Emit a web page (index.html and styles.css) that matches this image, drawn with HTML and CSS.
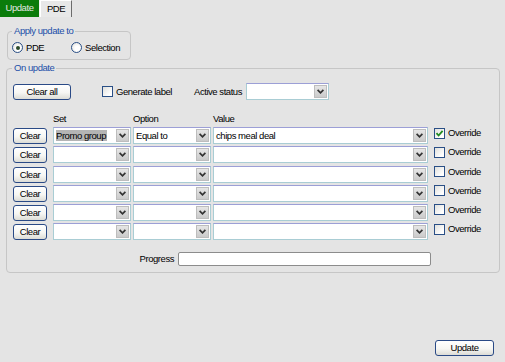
FILE: index.html
```html
<!DOCTYPE html>
<html>
<head>
<meta charset="utf-8">
<link rel="stylesheet" href="styles.css">
</head>
<body>
<div class="tabs">
  <div class="tab tab-active">Update</div>
  <div class="tab tab-idle">PDE</div>
</div>

<fieldset class="group group-apply">
  <legend>Apply update to</legend>
  <div class="radio-row">
    <span class="radio-item radio-first"><span class="radio radio-on"></span>PDE</span>
    <span class="radio-item"><span class="radio"></span>Selection</span>
  </div>
</fieldset>

<fieldset class="group group-on">
  <legend>On update</legend>
  <div class="toolbar">
    <button class="btn btn-clearall">Clear all</button>
    <span class="check-item check-gen"><span class="check"></span>Generate label</span>
    <span class="status-label">Active status</span>
    <span class="combo combo-status"><span class="combo-text"></span><span class="drop"><svg width="7" height="5" viewBox="0 0 7 5"><polyline points="0.6,0.8 3.5,3.8 6.4,0.8" fill="none" stroke="#333" stroke-width="1.7"/></svg></span></span>
  </div>

  <div class="grid">
    <div class="hdr"></div><div class="hdr">Set</div><div class="hdr">Option</div><div class="hdr">Value</div><div class="hdr"></div>

    <div><button class="btn btn-clear">Clear</button></div>
    <div><span class="combo combo-set"><span class="combo-text"><span class="sel">Promo group</span></span><span class="drop"><svg width="7" height="5" viewBox="0 0 7 5"><polyline points="0.6,0.8 3.5,3.8 6.4,0.8" fill="none" stroke="#333" stroke-width="1.7"/></svg></span></span></div>
    <div><span class="combo combo-opt"><span class="combo-text">Equal to</span><span class="drop"><svg width="7" height="5" viewBox="0 0 7 5"><polyline points="0.6,0.8 3.5,3.8 6.4,0.8" fill="none" stroke="#333" stroke-width="1.7"/></svg></span></span></div>
    <div><span class="combo combo-val"><span class="combo-text">chips meal deal</span><span class="drop"><svg width="7" height="5" viewBox="0 0 7 5"><polyline points="0.6,0.8 3.5,3.8 6.4,0.8" fill="none" stroke="#333" stroke-width="1.7"/></svg></span></span></div>
    <div><span class="check-item"><span class="check check-on"><svg width="9" height="9" viewBox="0 0 9 9"><polyline points="1.5,4.2 3.6,6.5 7.6,1.8" fill="none" stroke="#1f8a1f" stroke-width="1.8"/></svg></span>Override</span></div>

    <div><button class="btn btn-clear">Clear</button></div>
    <div><span class="combo combo-set"><span class="combo-text"></span><span class="drop"><svg width="7" height="5" viewBox="0 0 7 5"><polyline points="0.6,0.8 3.5,3.8 6.4,0.8" fill="none" stroke="#333" stroke-width="1.7"/></svg></span></span></div>
    <div><span class="combo combo-opt"><span class="combo-text"></span><span class="drop"><svg width="7" height="5" viewBox="0 0 7 5"><polyline points="0.6,0.8 3.5,3.8 6.4,0.8" fill="none" stroke="#333" stroke-width="1.7"/></svg></span></span></div>
    <div><span class="combo combo-val"><span class="combo-text"></span><span class="drop"><svg width="7" height="5" viewBox="0 0 7 5"><polyline points="0.6,0.8 3.5,3.8 6.4,0.8" fill="none" stroke="#333" stroke-width="1.7"/></svg></span></span></div>
    <div><span class="check-item"><span class="check"></span>Override</span></div>

    <div><button class="btn btn-clear">Clear</button></div>
    <div><span class="combo combo-set"><span class="combo-text"></span><span class="drop"><svg width="7" height="5" viewBox="0 0 7 5"><polyline points="0.6,0.8 3.5,3.8 6.4,0.8" fill="none" stroke="#333" stroke-width="1.7"/></svg></span></span></div>
    <div><span class="combo combo-opt"><span class="combo-text"></span><span class="drop"><svg width="7" height="5" viewBox="0 0 7 5"><polyline points="0.6,0.8 3.5,3.8 6.4,0.8" fill="none" stroke="#333" stroke-width="1.7"/></svg></span></span></div>
    <div><span class="combo combo-val"><span class="combo-text"></span><span class="drop"><svg width="7" height="5" viewBox="0 0 7 5"><polyline points="0.6,0.8 3.5,3.8 6.4,0.8" fill="none" stroke="#333" stroke-width="1.7"/></svg></span></span></div>
    <div><span class="check-item"><span class="check"></span>Override</span></div>

    <div><button class="btn btn-clear">Clear</button></div>
    <div><span class="combo combo-set"><span class="combo-text"></span><span class="drop"><svg width="7" height="5" viewBox="0 0 7 5"><polyline points="0.6,0.8 3.5,3.8 6.4,0.8" fill="none" stroke="#333" stroke-width="1.7"/></svg></span></span></div>
    <div><span class="combo combo-opt"><span class="combo-text"></span><span class="drop"><svg width="7" height="5" viewBox="0 0 7 5"><polyline points="0.6,0.8 3.5,3.8 6.4,0.8" fill="none" stroke="#333" stroke-width="1.7"/></svg></span></span></div>
    <div><span class="combo combo-val"><span class="combo-text"></span><span class="drop"><svg width="7" height="5" viewBox="0 0 7 5"><polyline points="0.6,0.8 3.5,3.8 6.4,0.8" fill="none" stroke="#333" stroke-width="1.7"/></svg></span></span></div>
    <div><span class="check-item"><span class="check"></span>Override</span></div>

    <div><button class="btn btn-clear">Clear</button></div>
    <div><span class="combo combo-set"><span class="combo-text"></span><span class="drop"><svg width="7" height="5" viewBox="0 0 7 5"><polyline points="0.6,0.8 3.5,3.8 6.4,0.8" fill="none" stroke="#333" stroke-width="1.7"/></svg></span></span></div>
    <div><span class="combo combo-opt"><span class="combo-text"></span><span class="drop"><svg width="7" height="5" viewBox="0 0 7 5"><polyline points="0.6,0.8 3.5,3.8 6.4,0.8" fill="none" stroke="#333" stroke-width="1.7"/></svg></span></span></div>
    <div><span class="combo combo-val"><span class="combo-text"></span><span class="drop"><svg width="7" height="5" viewBox="0 0 7 5"><polyline points="0.6,0.8 3.5,3.8 6.4,0.8" fill="none" stroke="#333" stroke-width="1.7"/></svg></span></span></div>
    <div><span class="check-item"><span class="check"></span>Override</span></div>

    <div><button class="btn btn-clear">Clear</button></div>
    <div><span class="combo combo-set"><span class="combo-text"></span><span class="drop"><svg width="7" height="5" viewBox="0 0 7 5"><polyline points="0.6,0.8 3.5,3.8 6.4,0.8" fill="none" stroke="#333" stroke-width="1.7"/></svg></span></span></div>
    <div><span class="combo combo-opt"><span class="combo-text"></span><span class="drop"><svg width="7" height="5" viewBox="0 0 7 5"><polyline points="0.6,0.8 3.5,3.8 6.4,0.8" fill="none" stroke="#333" stroke-width="1.7"/></svg></span></span></div>
    <div><span class="combo combo-val"><span class="combo-text"></span><span class="drop"><svg width="7" height="5" viewBox="0 0 7 5"><polyline points="0.6,0.8 3.5,3.8 6.4,0.8" fill="none" stroke="#333" stroke-width="1.7"/></svg></span></span></div>
    <div><span class="check-item"><span class="check"></span>Override</span></div>
  </div>

  <div class="progress-row">
    <span class="progress-label">Progress</span>
    <span class="progress"></span>
  </div>
</fieldset>

<div class="footer">
  <button class="btn btn-update">Update</button>
</div>
</body>
</html>
```

FILE: styles.css
```css
* { box-sizing: border-box; }

html, body {
  margin: 0;
  padding: 0;
}

body {
  width: 505px;
  height: 362px;
  overflow: hidden;
  background: #e4e4e4;
  color: #000;
  font-family: "Liberation Sans", Arial, sans-serif;
  font-size: 9.5px;
  letter-spacing: -0.45px;
  line-height: 12px;
}

/* tabs */
.tabs {
  display: flex;
  height: 17px;
}
.tab {
  height: 17px;
  line-height: 16px;
  text-align: center;
}
.tab-active {
  width: 40px;
  background: #0b7c0b;
  color: #e2e6e2;
  border-right: 1px solid #f4f4f4;
}
.tab-idle {
  width: 32px;
  background: #e8e8e8;
  border-left: 1px solid #fff;
  border-right: 1px solid #6c6c6c;
  border-top: 1px solid #fff;
}

/* group boxes */
.group {
  margin: 0;
  border: 1px solid #c6c6c6;
  border-radius: 4px;
  min-width: 0;
}
.group legend {
  color: #1c4fa8;
  padding: 0 2px;
  line-height: 12px;
}
.group-apply {
  width: 124px;
  margin: 8px 0 0 7px;
  padding: 4px 4px 5px 4px;
}
.group-on {
  width: 494px;
  margin: 2px 0 0 6px;
  padding: 9px 6px 6px 6px;
}
.group-on legend {
  margin-left: -1px;
}

/* radios */
.radio-row {
  display: flex;
  align-items: center;
  height: 13px;
}
.radio-item {
  display: inline-flex;
  align-items: center;
  gap: 3px;
}
.radio-first {
  width: 59px;
}
.radio {
  width: 11px;
  height: 11px;
  border-radius: 50%;
  border: 1px solid #2a4f86;
  background: radial-gradient(circle at 60% 60%, #ffffff 30%, #dcdcd6 100%);
  display: inline-flex;
  align-items: center;
  justify-content: center;
}
.radio-on::after {
  content: "";
  width: 4px;
  height: 4px;
  border-radius: 50%;
  background: #2b4a2b;
}

/* buttons */
.btn {
  font: inherit;
  letter-spacing: inherit;
  color: #000;
  padding: 0;
  border: 1px solid #2a4a86;
  border-radius: 3px;
  background: linear-gradient(#ffffff 0%, #f6f6f3 55%, #dcdcd6 100%);
  text-align: center;
  line-height: 12px;
}
.btn-clearall {
  width: 58px;
  height: 16px;
}
.btn-clear {
  width: 34px;
  height: 16px;
  margin-top: 1px;
}
.btn-update {
  width: 59px;
  height: 16px;
}

/* toolbar */
.toolbar {
  display: flex;
  align-items: center;
  height: 17px;
}
.toolbar .btn-clearall {
  margin-right: 31px;
}
.check-item {
  display: inline-flex;
  align-items: center;
  gap: 3px;
  white-space: nowrap;
}
.check-gen {
  width: 92px;
}
.check {
  width: 11px;
  height: 11px;
  border: 1px solid #2a4f86;
  background: linear-gradient(135deg, #e0e0dc 0%, #ffffff 80%);
  display: inline-flex;
  align-items: center;
  justify-content: center;
}
.status-label {
  width: 52px;
  white-space: nowrap;
}

/* combos */
.combo {
  display: flex;
  height: 17px;
  background: #fff;
  border: 1px solid #a9cdd4;
  border-top-color: #9c9fd6;
}
.combo-text {
  flex: 1;
  padding-left: 2px;
  line-height: 15px;
  white-space: nowrap;
  overflow: hidden;
}
.sel {
  background: #b4b4b4;
  padding-right: 1px;
}
.drop {
  width: 13px;
  margin: 1px;
  border: 1px solid #bdbdbd;
  background: linear-gradient(#e6e6e6, #cacaca);
  display: flex;
  align-items: center;
  justify-content: center;
}
.combo-status { width: 83px; }
.combo-set { width: 78px; }
.combo-opt { width: 78px; }
.combo-val { width: 215px; }

/* grid */
.grid {
  display: grid;
  grid-template-columns: 40px 80px 80px 221px 1fr;
  grid-template-rows: 12px repeat(6, 17px);
  row-gap: 2.2px;
  margin-top: 13px;
}
.grid .hdr {
  line-height: 12px;
}
.grid > div {
  display: flex;
  align-items: flex-start;
}

/* progress */
.progress-row {
  display: flex;
  align-items: center;
  height: 14px;
  margin-top: 12px;
}
.progress-label {
  width: 165px;
  text-align: right;
  padding-right: 4px;
}
.progress {
  width: 253px;
  height: 14px;
  background: #fff;
  border: 1px solid #8c8c8c;
  border-radius: 2px;
}

/* footer */
.footer {
  display: flex;
  justify-content: flex-end;
  padding-right: 11px;
  margin-top: 67px;
}
```
